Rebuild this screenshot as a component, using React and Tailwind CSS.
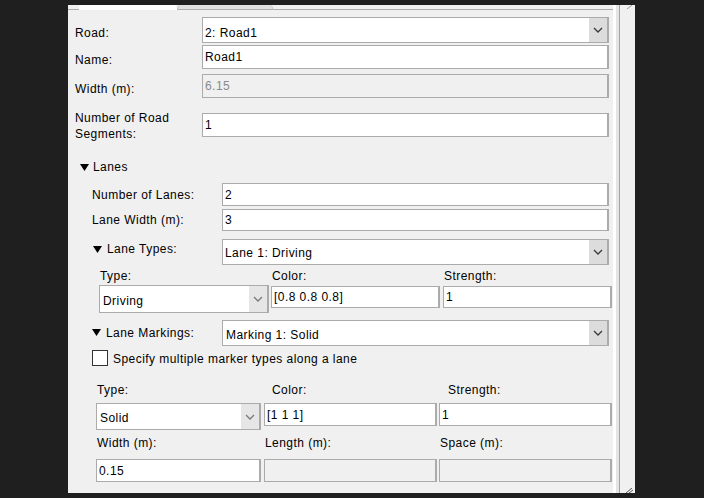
import React from "react";

const Chevron = ({ light }) => (
  <svg width="10" height="6" viewBox="0 0 10 6" fill="none">
    <polyline
      points="1,1 5,5 9,1"
      stroke={light ? "#7a7a7a" : "#3a3a3a"}
      strokeWidth="1.3"
    />
  </svg>
);

const Caret = () => (
  <svg width="9" height="7" viewBox="0 0 9 7">
    <polygon points="0,0 9,0 4.5,7" fill="#000" />
  </svg>
);

const Box = ({ className = "", text, disabled, dropdown, light, textClass = "" }) => (
  <div
    className={`flex items-stretch border border-r-2 border-[#ababab] ${
      disabled ? "bg-[#f0f0f0]" : "bg-white"
    } ${className}`}
  >
    <div
      className={`flex-1 flex items-center pl-[2px] whitespace-nowrap ${
        disabled ? "text-[#8a8a8a]" : "text-black"
      } ${textClass}`}
    >
      {text}
    </div>
    {dropdown && (
      <div
        className={`w-[18px] flex items-center justify-center ${
          light ? "bg-[#e6e6e6]" : "bg-[#dcdcdc]"
        }`}
      >
        <Chevron light={light} />
      </div>
    )}
  </div>
);

export default function App() {
  return (
    <div className="w-[704px] h-[498px] bg-[#1f1f1f] overflow-hidden pt-[5px] pl-[68px] font-['Liberation_Sans',Arial,sans-serif] text-[12px] tracking-[0.45px] text-black">
      <div className="relative w-[567px] h-[488px] bg-[#f0f0f0] flex">
        <div className="flex-1 flex flex-col">
          {/* tab strip */}
          <div className="flex h-[5px]">
            <div className="w-[11px] border-b border-[#adadad] rounded-tr-[4px]" />
            <div className="w-[98px] bg-white rounded-t-[3px]" />
            <div className="w-[96px] bg-[#e0e0e0] border-b border-x border-[#c4c4c4] border-b-[#adadad] rounded-t-[4px]" />
            <div className="flex-1 border-b border-[#adadad]" />
          </div>

          {/* road */}
          <div className="flex mt-[7px] h-[26px] pl-[7px]">
            <div className="w-[127px] flex items-center pt-[5px]">Road:</div>
            <Box className="w-[407px]" text="2: Road1" dropdown textClass="pt-[5px]" />
          </div>
          <div className="flex mt-[2px] h-[24px] pl-[7px]">
            <div className="w-[127px] flex items-center pt-[5px]">Name:</div>
            <Box className="w-[407px]" text="Road1" />
          </div>
          <div className="flex mt-[5px] h-[24px] pl-[7px]">
            <div className="w-[127px] flex items-center pt-[5px]">Width (m):</div>
            <Box className="w-[407px]" text="6.15" disabled />
          </div>
          <div className="flex mt-[15px] h-[24px] pl-[7px]">
            <div className="w-[127px] -mt-[3px] leading-[16px]">
              Number of Road
              <br />
              Segments:
            </div>
            <Box className="w-[407px]" text="1" />
          </div>

          {/* lanes */}
          <div className="flex items-center gap-[4px] mt-[22px] h-[16px] pl-[12px]">
            <Caret />
            <span>Lanes</span>
          </div>
          <div className="flex mt-[8px] h-[23px] pl-[24px]">
            <div className="w-[130px] flex items-center">Number of Lanes:</div>
            <Box className="w-[387px]" text="2" />
          </div>
          <div className="flex mt-[3px] h-[22px] pl-[24px]">
            <div className="w-[130px] flex items-center">Lane Width (m):</div>
            <Box className="w-[387px]" text="3" />
          </div>
          <div className="flex mt-[8px] h-[26px] pl-[25px]">
            <div className="w-[129px] flex items-center gap-[5px] pb-[6px]">
              <Caret />
              <span>Lane Types:</span>
            </div>
            <Box className="w-[387px]" text="Lane 1: Driving" dropdown textClass="pt-[1px]" />
          </div>
          <div className="flex items-center mt-[4px] h-[14px] pl-[32px]">
            <div className="w-[172px]">Type:</div>
            <div className="w-[172px]">Color:</div>
            <div>Strength:</div>
          </div>
          <div className="flex items-start mt-[2px] h-[28px] pl-[31px]">
            <Box className="w-[170px] h-[28px]" text="Driving" dropdown light textClass="pt-[3px] pl-[3px]" />
            <Box className="w-[169px] h-[22px] mt-[1px] ml-[2px]" text="[0.8 0.8 0.8]" />
            <Box className="w-[169px] h-[22px] mt-[1px] ml-[3px]" text="1" />
          </div>

          {/* lane markings */}
          <div className="flex mt-[7px] h-[26px] pl-[24px]">
            <div className="w-[130px] flex items-center gap-[5px] pb-[1px]">
              <Caret />
              <span>Lane Markings:</span>
            </div>
            <Box className="w-[387px]" text="Marking 1: Solid" dropdown textClass="pt-[3px] pl-[3px]" />
          </div>
          <div className="flex items-center mt-[4px] h-[16px] pl-[24px]">
            <div className="w-[16px] h-[16px] bg-white border border-[#333]" />
            <span className="ml-[5px] pt-[1px]">Specify multiple marker types along a lane</span>
          </div>
          <div className="flex items-center mt-[17px] h-[14px] pl-[29px]">
            <div className="w-[175px]">Type:</div>
            <div className="w-[176px]">Color:</div>
            <div>Strength:</div>
          </div>
          <div className="flex items-start mt-[6px] h-[27px] pl-[28px]">
            <Box className="w-[165px] h-[27px]" text="Solid" dropdown light textClass="pt-[2px] pl-[3px]" />
            <Box className="w-[173px] h-[23px] ml-[3px]" text="[1 1 1]" />
            <Box className="w-[173px] h-[23px] ml-[2px]" text="1" />
          </div>
          <div className="flex items-center mt-[6px] h-[14px] pl-[29px]">
            <div className="w-[168px]">Width (m):</div>
            <div className="w-[175px]">Length (m):</div>
            <div>Space (m):</div>
          </div>
          <div className="flex mt-[9px] h-[23px] pl-[28px]">
            <Box className="w-[165px]" text="0.15" />
            <Box className="w-[173px] ml-[3px]" text="" disabled />
            <Box className="w-[173px] ml-[2px]" text="" disabled />
          </div>
        </div>

        {/* scroll edge */}
        <div className="w-[22px] flex">
          <div className="w-[3px] bg-white" />
          <div className="w-[3px] bg-[#e4e4e4]" />
          <div className="w-[1px] bg-[#a3a3a3]" />
          <div className="flex-1 bg-[#f0f0f0]" />
        </div>

        <svg className="absolute right-[2px] top-0" width="6" height="4" viewBox="0 0 6 4">
          <line x1="0" y1="4" x2="5" y2="0" stroke="#9a9a9a" strokeWidth="1" />
        </svg>
        <svg className="absolute right-[2px] bottom-0" width="7" height="5" viewBox="0 0 7 5">
          <line x1="0" y1="5" x2="6" y2="0" stroke="#555" strokeWidth="1" />
          <line x1="3" y1="5" x2="7" y2="2" stroke="#555" strokeWidth="1" />
        </svg>
      </div>
    </div>
  );
}
